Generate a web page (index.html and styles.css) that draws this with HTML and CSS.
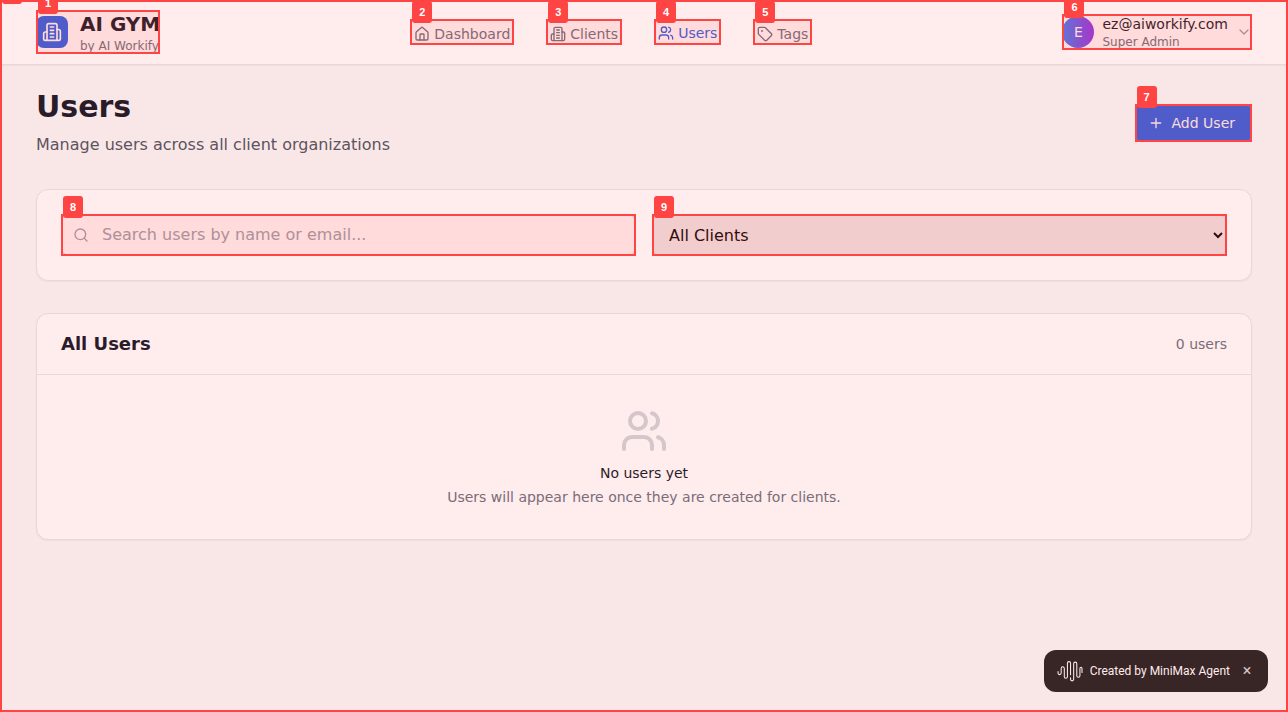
FILE: index.html
```html
<!DOCTYPE html>
<html lang="en">
<head>
<meta charset="utf-8">
<meta name="viewport" content="width=device-width, initial-scale=1">
<title>AI GYM – Users</title>
<link rel="stylesheet" href="styles.css">
</head>
<body>
<svg class="sprite" aria-hidden="true">
  <symbol id="building" viewBox="0 0 24 24"><path d="M6 22V4a2 2 0 0 1 2-2h8a2 2 0 0 1 2 2v18Z"/><path d="M6 12H4a2 2 0 0 0-2 2v6a2 2 0 0 0 2 2h2"/><path d="M18 9h2a2 2 0 0 1 2 2v9a2 2 0 0 1-2 2h-2"/><path d="M10 6h4M10 10h4M10 14h4M10 18h4"/></symbol>
  <symbol id="users" viewBox="0 0 24 24"><path d="M16 21v-2a4 4 0 0 0-4-4H6a4 4 0 0 0-4 4v2"/><circle cx="9" cy="7" r="4"/><path d="M22 21v-2a4 4 0 0 0-3-3.87"/><path d="M16 3.13a4 4 0 0 1 0 7.75"/></symbol>
  <symbol id="house" viewBox="0 0 24 24"><path d="M15 21v-8a1 1 0 0 0-1-1h-4a1 1 0 0 0-1 1v8"/><path d="M3 10a2 2 0 0 1 .709-1.528l7-5.999a2 2 0 0 1 2.582 0l7 5.999A2 2 0 0 1 21 10v9a2 2 0 0 1-2 2H5a2 2 0 0 1-2-2z"/></symbol>
  <symbol id="tag" viewBox="0 0 24 24"><path d="M12.586 2.586A2 2 0 0 0 11.172 2H4a2 2 0 0 0-2 2v7.172a2 2 0 0 0 .586 1.414l8.704 8.704a2.426 2.426 0 0 0 3.42 0l6.58-6.58a2.426 2.426 0 0 0 0-3.42z"/><circle cx="7.5" cy="7.5" r=".5" fill="currentColor"/></symbol>
</svg>

<header class="topbar">
  <div class="container topbar-row">
    <a class="brand marked" href="#">
      <span class="brand-mark"><svg class="icon icon-md"><use href="#building"/></svg></span>
      <span class="stack">
        <span class="brand-name">AI GYM</span>
        <span class="caption">by AI Workify</span>
      </span>
      <span class="mark"><span class="mark-label">1</span></span>
    </a>
    <nav class="nav">
      <a class="nav-link marked" href="#"><svg class="icon"><use href="#house"/></svg>Dashboard<span class="mark"><span class="mark-label">2</span></span></a>
      <a class="nav-link marked" href="#"><svg class="icon"><use href="#building"/></svg>Clients<span class="mark"><span class="mark-label">3</span></span></a>
      <a class="nav-link nav-link-active marked" href="#" aria-current="page"><svg class="icon"><use href="#users"/></svg>Users<span class="mark mark-over-border"><span class="mark-label">4</span></span></a>
      <a class="nav-link marked" href="#"><svg class="icon"><use href="#tag"/></svg>Tags<span class="mark"><span class="mark-label">5</span></span></a>
    </nav>
    <button class="account marked" type="button">
      <span class="avatar">E</span>
      <span class="stack">
        <span class="account-email">ez@aiworkify.com</span>
        <span class="caption">Super Admin</span>
      </span>
      <svg class="icon icon-muted" viewBox="0 0 24 24"><path d="m6 9 6 6 6-6"/></svg>
      <span class="mark"><span class="mark-label">6</span></span>
    </button>
  </div>
</header>

<main class="container content">
  <div class="page-head">
    <div>
      <h1 class="page-title">Users</h1>
      <p class="page-subtitle">Manage users across all client organizations</p>
    </div>
    <div class="marked">
      <button class="add-button" type="button"><svg class="icon" viewBox="0 0 24 24"><path d="M5 12h14M12 5v14"/></svg>Add User</button>
      <span class="mark"><span class="mark-label">7</span></span>
    </div>
  </div>

  <section class="card filters" aria-label="Filters">
    <div class="marked">
      <svg class="icon icon-muted search-icon" viewBox="0 0 24 24"><circle cx="11" cy="11" r="8"/><path d="m21 21-4.3-4.3"/></svg>
      <input class="field search-field" type="text" aria-label="Search users" placeholder="Search users by name or email...">
      <span class="mark"><span class="mark-label">8</span></span>
    </div>
    <div class="marked">
      <select class="field client-field" aria-label="Client"><option>All Clients</option></select>
      <span class="mark"><span class="mark-label">9</span></span>
    </div>
  </section>

  <section class="card">
    <div class="card-head">
      <h2 class="card-title">All Users</h2>
      <span class="card-count">0 users</span>
    </div>
    <div class="empty">
      <svg class="icon icon-lg icon-muted"><use href="#users"/></svg>
      <h3 class="empty-title">No users yet</h3>
      <p class="empty-text">Users will appear here once they are created for clients.</p>
    </div>
  </section>
</main>

<div class="credit">
  <svg class="credit-logo" viewBox="0 0 24 20"><path d="M1 10v1.500a1.500 1.500 0 0 0 3 0V7a1.500 1.500 0 0 1 3 0v8a1.500 1.500 0 0 0 3 0V2a1.500 1.500 0 0 1 3 0v11M13 16v1.500a1.500 1.500 0 0 0 3 0V2.500a1.500 1.500 0 0 1 3 0V14a1.500 1.500 0 0 0 3 0V7a1 1 0 0 1 2 0v4"/></svg>
  <span>Created by MiniMax Agent</span>
  <button class="credit-close" type="button" aria-label="Close">×</button>
</div>
<div class="mark page-mark"><span class="mark-label page-label"></span></div>
</body>
</html>
```
FILE: styles.css
```css
* { box-sizing: border-box; }
body {
  margin: 0;
  min-height: 100vh;
  background: #f9fafb;
  color: #111827;
  font: 16px/24px "DejaVu Sans", sans-serif;
}
h1, h2, h3, p { margin: 0; }
a { color: inherit; text-decoration: none; }
button, input, select { font: inherit; }
button { margin: 0; border: 0; padding: 0; background: none; color: inherit; cursor: pointer; }

.sprite { display: none; }
.icon {
  width: 16px;
  height: 16px;
  flex: none;
  fill: none;
  stroke: currentColor;
  stroke-width: 2;
  stroke-linecap: round;
  stroke-linejoin: round;
}
.icon-md { width: 20px; height: 20px; }
.icon-lg { width: 48px; height: 48px; }
.icon-muted { color: #9ca3af; }

.container { max-width: 1280px; margin: 0 auto; padding: 0 32px; }
.stack { display: flex; flex-direction: column; text-align: left; }
.caption { color: #6b7280; font-size: 12px; line-height: 16px; }

.topbar {
  background: #fff;
  border-bottom: 1px solid #e5e7eb;
  box-shadow: 0 1px 2px rgba(0, 0, 0, .05);
}
.topbar-row { display: flex; align-items: center; justify-content: space-between; height: 64px; }
.brand { display: flex; align-items: center; gap: 12px; }
.brand-mark {
  display: grid;
  place-items: center;
  width: 32px;
  height: 32px;
  border-radius: 8px;
  background: #2563eb;
  color: #fff;
}
.brand-name { font-size: 20px; line-height: 28px; font-weight: 700; }
.nav { display: flex; gap: 32px; }
.nav-link {
  display: flex;
  align-items: center;
  gap: 4px;
  min-height: 26px;
  padding: 4px 4px 0;
  color: #6b7280;
  font-size: 14px;
  line-height: 20px;
}
.nav-link-active { border-bottom: 2px solid #3b82f6; color: #2563eb; }
.account { display: flex; align-items: center; gap: 8px; }
.account-email { font-size: 14px; line-height: 20px; }
.avatar {
  display: grid;
  place-items: center;
  width: 32px;
  height: 32px;
  border-radius: 50%;
  background: linear-gradient(to right, #3b82f6, #9333ea);
  color: #fff;
  font-size: 14px;
  line-height: 20px;
}

.content { display: flex; flex-direction: column; gap: 32px; padding-top: 24px; padding-bottom: 24px; }
.page-head { display: flex; align-items: center; justify-content: space-between; }
.page-title { font-size: 30px; line-height: 36px; }
.page-subtitle { margin-top: 8px; color: #4b5563; }
.add-button {
  display: flex;
  align-items: center;
  gap: 8px;
  padding: 9px 17px 9px 13px;
  border-radius: 8px;
  background: #2563eb;
  color: #fff;
  font-size: 14px;
  line-height: 20px;
}

.card {
  border: 1px solid #e5e7eb;
  border-radius: 12px;
  background: #fff;
  box-shadow: 0 1px 2px rgba(0, 0, 0, .05);
}
.filters { display: grid; grid-template-columns: 1fr 1fr; gap: 16px; padding: 24px; }
.field {
  display: block;
  width: 100%;
  height: 42px;
  margin: 0;
  border: 1px solid #d1d5db;
  border-radius: 8px;
}
.search-field { padding: 8px 12px 10px 40px; background: #fff; }
.search-field::placeholder { color: #9ca3af; opacity: 1; }
.search-icon { position: absolute; left: 12px; top: 13px; }
.client-field { padding: 8px 12px; background-color: #efefef; color: #000; }
.card-head {
  display: flex;
  align-items: center;
  justify-content: space-between;
  padding: 16px 24px;
  border-bottom: 1px solid #e5e7eb;
}
.card-title { font-size: 18px; line-height: 28px; }
.card-count { color: #6b7280; font-size: 14px; line-height: 20px; }
.empty {
  display: flex;
  flex-direction: column;
  align-items: center;
  padding: 32px 24px;
  font-size: 14px;
  line-height: 20px;
}
.empty .icon { color: #d1d5db; }
.empty-title { margin-top: 8px; font-size: 14px; font-weight: 400; }
.empty-text { margin-top: 4px; color: #6b7280; }

.credit {
  position: fixed;
  right: 20px;
  bottom: 20px;
  display: flex;
  align-items: center;
  gap: 8px;
  height: 42px;
  padding: 0 12px 0 13px;
  border-radius: 12px;
  background: #222;
  color: #fff;
  font: 12px/18px Roboto, sans-serif;
}
.credit-logo {
  width: 25px;
  height: 21px;
  overflow: visible;
  fill: none;
  stroke: currentColor;
  stroke-linecap: round;
}
.credit-close { width: 18px; font-size: 16px; opacity: .8; }

/* Numbered outlines drawn over interactive elements */
.marked { position: relative; }
.mark {
  position: absolute;
  inset: 0;
  z-index: 20;
  border: 2px solid #f44;
  background: rgba(255, 68, 68, .1);
  pointer-events: none;
}
.mark-over-border { bottom: -2px; }
.page-mark { position: fixed; z-index: 10; }
.mark-label {
  position: absolute;
  top: -20px;
  left: 0;
  width: 20px;
  border-radius: 3px;
  background: #f44;
  color: #fff;
  font: bold 11px/22px "Liberation Sans", sans-serif;
  text-align: center;
}
.page-label { height: 22px; }
```
